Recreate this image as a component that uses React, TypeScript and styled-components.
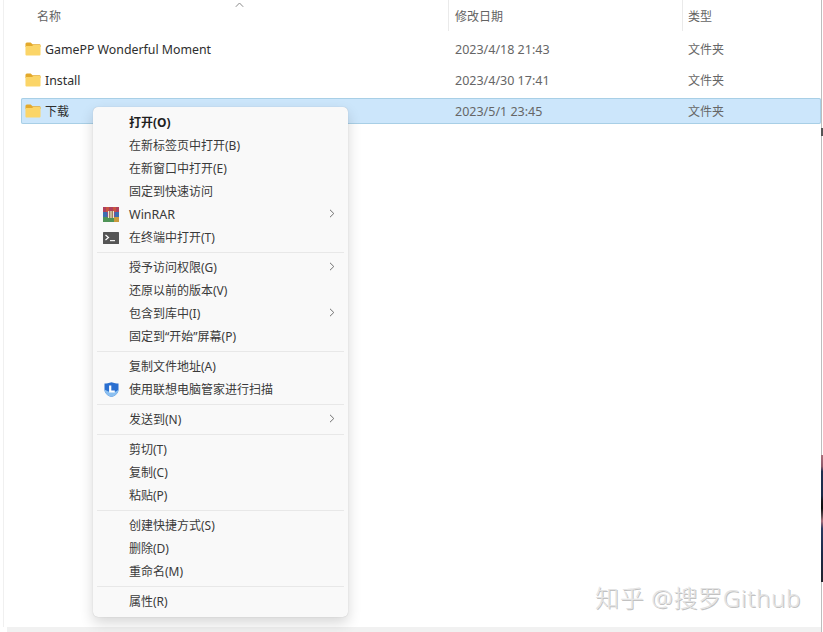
import React from "react";
import styled, { createGlobalStyle } from "styled-components";

const Global = createGlobalStyle`
  html, body { margin: 0; padding: 0; background: #fff; }
  body { font-family: "Noto Sans", "Noto Sans CJK SC", sans-serif; overflow: hidden; }
`;

const Page = styled.div`
  position: relative;
  width: 823px;
  height: 632px;
  overflow: hidden;
  background: #fff;
  display: flex;
  flex-direction: column;
  box-sizing: border-box;
  padding: 0 1px 0 3px;
`;

const Pane = styled.div`
  flex: 1;
  display: flex;
  flex-direction: column;
  border-left: 1px solid #f0f0f0;
  border-right: 1px solid #bdbdbd;
  padding-left: 17px;
  min-height: 0;
`;

const Footer = styled.div`
  height: 5px;
  margin-left: 4px;
  background: #f1f1f1;
  border-right: 1px solid #bdbdbd;
`;

const EdgeTick = styled.div`
  position: absolute;
  left: 821px;
  top: 128px;
  width: 2px;
  height: 8px;
  background: #555;
`;

const EdgeStrip = styled.div`
  position: absolute;
  left: 821px;
  top: 455px;
  width: 2px;
  height: 127px;
  background: linear-gradient(
    to bottom,
    #a8707c 0%,
    #8a5a6a 9%,
    #1f3050 13%,
    #1b2a48 32%,
    #14141a 36%,
    #0c0c0e 42%,
    #5a4a50 48%,
    #a8707c 52%,
    #2a3a60 58%,
    #1b2a48 78%,
    #22232c 100%
  );
`;

const columns = "427px 234px 1fr";

const Header = styled.div`
  position: relative;
  display: grid;
  grid-template-columns: ${columns};
  height: 31px;
  flex: none;
`;

const HeaderCell = styled.div<{ $divider?: boolean; $indent: number }>`
  display: flex;
  align-items: center;
  height: 31px;
  padding-left: ${(p) => p.$indent}px;
  font-size: 12px;
  color: #636363;
  border-left: ${(p) => (p.$divider ? "1px solid #eaeaea" : "none")};
`;

const SortCaret = styled.svg`
  position: absolute;
  left: 214px;
  top: 2px;
`;

const Row = styled.div<{ $selected?: boolean }>`
  display: grid;
  grid-template-columns: ${columns};
  height: 26px;
  margin-top: 5px;
  align-items: center;
  box-sizing: border-box;
  background: ${(p) => (p.$selected ? "#cce6fb" : "transparent")};
  box-shadow: ${(p) => (p.$selected ? "inset 0 0 0 1px #a8cfe6" : "none")};
  border-radius: 2px;
  flex: none;
`;

const NameCell = styled.div`
  display: flex;
  align-items: center;
  gap: 4px;
  padding-left: 4px;
  color: #2e2e2e;
  white-space: nowrap;
`;

const NameText = styled.span<{ $latin: boolean }>`
  font-size: ${(p) => (p.$latin ? "12.35px" : "12px")};
`;

const DateCell = styled.div`
  padding-left: 7px;
  font-size: 12.5px;
  color: #666;
  white-space: nowrap;
`;

const TypeCell = styled.div`
  padding-left: 6px;
  font-size: 12px;
  color: #666;
  white-space: nowrap;
`;

const Menu = styled.div`
  position: absolute;
  left: 93px;
  top: 107px;
  width: 255px;
  box-sizing: border-box;
  padding: 4px 0;
  background: #f9f9f9;
  border-radius: 5px;
  box-shadow: 0 0 1px rgba(0, 0, 0, 0.22), 0 6px 14px rgba(0, 0, 0, 0.16);
`;

const Item = styled.div<{ $bold?: boolean; $latin?: boolean }>`
  position: relative;
  height: 23px;
  box-sizing: border-box;
  padding: 0 0 1px 36px;
  display: flex;
  align-items: center;
  font-size: ${(p) => (p.$latin ? "12.5px" : "12px")};
  font-weight: ${(p) => (p.$bold ? 700 : 400)};
  color: ${(p) => (p.$bold ? "#1f1f1f" : "#3a3a3a")};
  white-space: nowrap;
`;

const ItemIcon = styled.span`
  position: absolute;
  left: 9px;
  top: 3px;
  width: 18px;
  height: 17px;
  display: flex;
  align-items: center;
  justify-content: center;
`;

const Chevron = styled.svg`
  position: absolute;
  right: 13px;
  top: 6px;
`;

const Separator = styled.div`
  height: 1px;
  margin: 3px 4px;
  background: #e8e8e8;
`;

const Watermark = styled.div`
  position: absolute;
  left: 595px;
  top: 582px;
  font-size: 24px;
  font-weight: 300;
  line-height: 32px;
  letter-spacing: 0.7px;
  color: #e4e4e4;
  text-shadow: 1px 1px 0 #c2c2c2;
  white-space: nowrap;
`;

const Folder = () => (
  <svg width="16" height="14" viewBox="0 0 17 14" preserveAspectRatio="none">
    <path d="M0.5 2 Q0.5 0.5 2 0.5 H6 L8 2.2 H15.5 Q16.5 2.2 16.5 3.2 V5 H0.5 Z" fill="#e3a92c" />
    <path d="M0.5 4 H7.5 L9 3 H15.5 Q16.5 3 16.5 4 V12.5 Q16.5 13.5 15.5 13.5 H1.5 Q0.5 13.5 0.5 12.5 Z" fill="#fbd568" />
  </svg>
);

const Arrow = () => (
  <Chevron width="6" height="9" viewBox="0 0 6 9">
    <path d="M1 0.8 L4.8 4.5 L1 8.2" fill="none" stroke="#707070" strokeWidth="1" />
  </Chevron>
);

const WinRar = () => (
  <svg width="16" height="15" viewBox="0 0 16 15">
    <rect x="0" y="0" width="16" height="5" fill="#b0405c" />
    <rect x="0" y="5" width="16" height="5" fill="#7d4f96" />
    <rect x="0" y="10" width="16" height="5" fill="#4f9457" />
    <rect x="3" y="0" width="3" height="5" fill="#c8553f" />
    <rect x="10" y="0" width="3" height="5" fill="#c8553f" />
    <rect x="0" y="5" width="4" height="5" fill="#3c6fb0" />
    <rect x="12" y="5" width="4" height="5" fill="#3c6fb0" />
    <rect x="11" y="10" width="5" height="5" fill="#c99a3c" />
    <rect x="5" y="4" width="6" height="7" fill="#efe6d2" />
    <path d="M6.5 4 V11 M8 4 V11 M9.5 4 V11" stroke="#8a6a3c" strokeWidth="0.8" />
  </svg>
);

const Terminal = () => (
  <svg width="16" height="12" viewBox="0 0 16 12">
    <rect x="0" y="0" width="16" height="12" rx="0.5" fill="#555" />
    <path d="M2.5 3 L5.5 5.5 L2.5 8" fill="none" stroke="#fff" strokeWidth="1.2" />
    <rect x="7" y="8" width="5" height="1.2" fill="#eee" />
  </svg>
);

const Shield = () => (
  <svg width="15" height="15" viewBox="0 0 15 15">
    <path d="M7.5 0.3 C10 1.2 12.5 1.6 14.5 1.6 V7.5 C14.5 11.5 11 14 7.5 14.8 C4 14 0.5 11.5 0.5 7.5 V1.6 C2.5 1.6 5 1.2 7.5 0.3 Z" fill="#2a6fd0" />
    <path d="M0.5 7.5 C0.5 11.5 4 14 7.5 14.8 C11 14 14.5 11.5 14.5 7.5 C12 10.8 5.5 11 0.5 7.5 Z" fill="#8cc0f0" />
    <path d="M6.2 3.5 V9.5 H10.8" fill="none" stroke="#fff" strokeWidth="2.2" />
  </svg>
);

type Entry = { label: string; bold?: boolean; sub?: boolean; latin?: boolean; icon?: React.ReactNode };

const groups: Entry[][] = [
  [
    { label: "打开(O)", bold: true },
    { label: "在新标签页中打开(B)" },
    { label: "在新窗口中打开(E)" },
    { label: "固定到快速访问" },
    { label: "WinRAR", sub: true, latin: true, icon: <WinRar /> },
    { label: "在终端中打开(T)", icon: <Terminal /> },
  ],
  [
    { label: "授予访问权限(G)", sub: true },
    { label: "还原以前的版本(V)" },
    { label: "包含到库中(I)", sub: true },
    { label: "固定到“开始”屏幕(P)" },
  ],
  [
    { label: "复制文件地址(A)" },
    { label: "使用联想电脑管家进行扫描", icon: <Shield /> },
  ],
  [{ label: "发送到(N)", sub: true }],
  [{ label: "剪切(T)" }, { label: "复制(C)" }, { label: "粘贴(P)" }],
  [{ label: "创建快捷方式(S)" }, { label: "删除(D)" }, { label: "重命名(M)" }],
  [{ label: "属性(R)" }],
];

const files = [
  { name: "GamePP Wonderful Moment", date: "2023/4/18 21:43", latin: true },
  { name: "Install", date: "2023/4/30 17:41", latin: true },
  { name: "下载", date: "2023/5/1 23:45", latin: false, selected: true },
];

export default function App() {
  return (
    <Page>
      <Global />
      <Pane>
        <Header>
          <HeaderCell $indent={16}>名称</HeaderCell>
          <HeaderCell $divider $indent={6}>修改日期</HeaderCell>
          <HeaderCell $divider $indent={5}>类型</HeaderCell>
          <SortCaret width="9" height="6" viewBox="0 0 9 6">
            <path d="M0.8 4.8 L4.5 1 L8.2 4.8" fill="none" stroke="#8a8a8a" strokeWidth="1" />
          </SortCaret>
        </Header>
        {files.map((f) => (
          <Row key={f.name} $selected={f.selected}>
            <NameCell>
              <Folder />
              <NameText $latin={f.latin}>{f.name}</NameText>
            </NameCell>
            <DateCell>{f.date}</DateCell>
            <TypeCell>文件夹</TypeCell>
          </Row>
        ))}
      </Pane>
      <Footer />
      <EdgeTick />
      <EdgeStrip />
      <Menu>
        {groups.map((g, i) => (
          <React.Fragment key={i}>
            {i > 0 && <Separator />}
            {g.map((e) => (
              <Item key={e.label} $bold={e.bold} $latin={e.latin}>
                {e.icon && <ItemIcon>{e.icon}</ItemIcon>}
                {e.label}
                {e.sub && <Arrow />}
              </Item>
            ))}
          </React.Fragment>
        ))}
      </Menu>
      <Watermark>知乎 @搜罗Github</Watermark>
    </Page>
  );
}
